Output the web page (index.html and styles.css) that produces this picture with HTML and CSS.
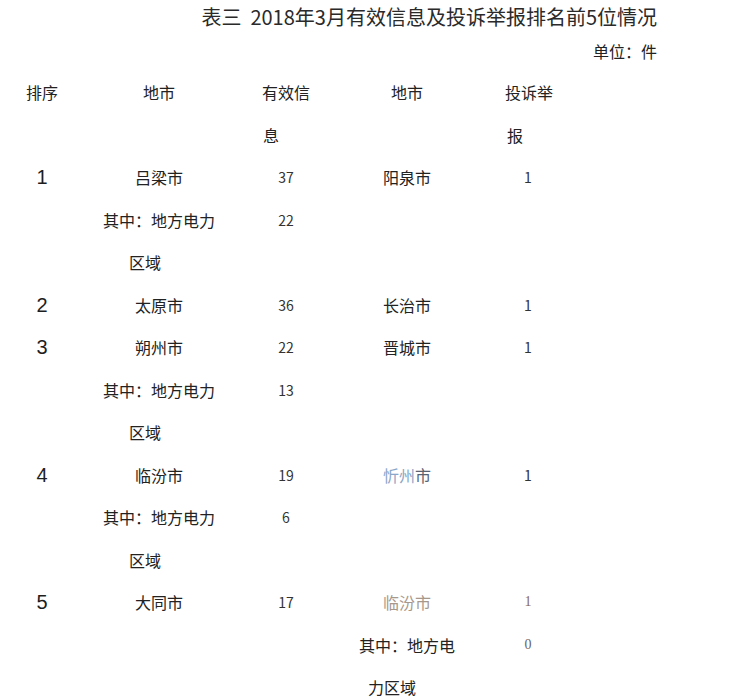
FILE: index.html
```html
<!DOCTYPE html>
<html lang="zh-CN">
<head>
<meta charset="utf-8">
<title>表三</title>
<link rel="stylesheet" href="styles.css">
</head>
<body>
<div class="page">
  <div class="title">表三&nbsp; 2018年3月有效信息及投诉举报排名前5位情况</div>
  <div class="unit">单位：件</div>
  <div class="table">
    <div class="row">
      <div class="c c1"><div class="l">排序</div></div>
      <div class="c c2"><div class="l">地市</div></div>
      <div class="c c3"><div class="l pad-h3">有效信</div><div class="l pad-h3b">息</div></div>
      <div class="c c4"><div class="l">地市</div></div>
      <div class="c c5"><div class="l pad-h5">投诉举</div><div class="l pad-h5b">报</div></div>
    </div>
    <div class="row">
      <div class="c c1"><div class="l rank">1</div></div>
      <div class="c c2"><div class="l">吕梁市</div><div class="l">其中：地方电力</div><div class="l pad-area">区域</div></div>
      <div class="c c3"><div class="l num">37</div><div class="l num">22</div></div>
      <div class="c c4"><div class="l">阳泉市</div></div>
      <div class="c c5"><div class="l num">1</div></div>
    </div>
    <div class="row">
      <div class="c c1"><div class="l rank">2</div></div>
      <div class="c c2"><div class="l">太原市</div></div>
      <div class="c c3"><div class="l num">36</div></div>
      <div class="c c4"><div class="l">长治市</div></div>
      <div class="c c5"><div class="l num">1</div></div>
    </div>
    <div class="row">
      <div class="c c1"><div class="l rank">3</div></div>
      <div class="c c2"><div class="l">朔州市</div><div class="l">其中：地方电力</div><div class="l pad-area">区域</div></div>
      <div class="c c3"><div class="l num">22</div><div class="l num">13</div></div>
      <div class="c c4"><div class="l">晋城市</div></div>
      <div class="c c5"><div class="l num">1</div></div>
    </div>
    <div class="row">
      <div class="c c1"><div class="l rank">4</div></div>
      <div class="c c2"><div class="l">临汾市</div><div class="l">其中：地方电力</div><div class="l pad-area">区域</div></div>
      <div class="c c3"><div class="l num">19</div><div class="l num">6</div></div>
      <div class="c c4"><div class="l faded-blue">忻州<span class="faded-dark">市</span></div></div>
      <div class="c c5"><div class="l num">1</div></div>
    </div>
    <div class="row">
      <div class="c c1"><div class="l rank">5</div></div>
      <div class="c c2"><div class="l">大同市</div></div>
      <div class="c c3"><div class="l num">17</div></div>
      <div class="c c4"><div class="l faded-tan">临汾市</div><div class="l">其中：地方电</div><div class="l pad-area4">力区域</div></div>
      <div class="c c5"><div class="l num tan">1</div><div class="l num gray">0</div></div>
    </div>
  </div>
</div>
</body>
</html>
```

FILE: styles.css
```css
html, body {
  margin: 0;
  padding: 0;
  overflow: hidden;
  background: #ffffff;
}

body {
  font-family: "Noto Sans CJK SC", "Noto Sans", sans-serif;
  color: #222222;
}

.page {
  width: 741px;
}

.title {
  width: 657px;
  text-align: right;
  font-size: 20px;
  line-height: 34px;
  color: #2a2a2a;
}

.unit {
  width: 657px;
  text-align: right;
  font-size: 16px;
  line-height: 34px;
}

.table {
  margin-top: 3px;
}

.row {
  display: grid;
  grid-template-columns: 84px 150px 104px 138px 104px;
}

.c {
  display: flex;
  flex-direction: column;
}

.l {
  height: 42.5px;
  line-height: 42.5px;
  font-size: 16px;
  text-align: center;
  white-space: nowrap;
}

.rank {
  font-family: "Liberation Sans", Arial, sans-serif;
  font-size: 20px;
  color: #1e1e1e;
}

.num {
  font-size: 14px;
  color: #333333;
}

.pad-h3 { text-align: left; padding-left: 28px; }
.pad-h3b { text-align: left; padding-left: 29px; }
.pad-h5 { text-align: left; padding-left: 29px; }
.pad-h5b { text-align: left; padding-left: 31px; }
.pad-area { text-align: left; padding-left: 45px; }
.pad-area4 { text-align: left; padding-left: 30px; }

.faded-blue { color: #8aa6c8; }
.faded-dark { color: #5a6270; }
.faded-tan { color: #a8988c; }
.tan { color: #8a6a50; font-family: "Liberation Serif", serif; }
.gray { color: #666666; font-family: "Liberation Serif", serif; }
```
